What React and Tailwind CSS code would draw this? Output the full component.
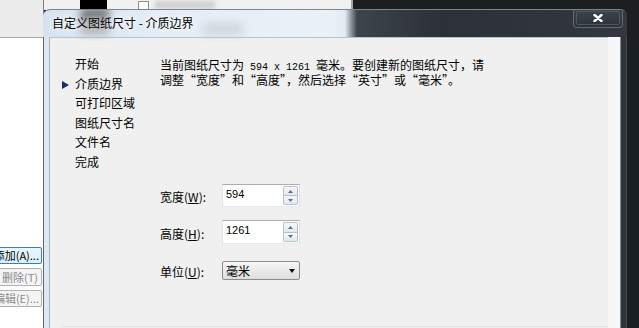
import React from 'react';

const SpinArrows = () => (
  <div className="flex flex-col w-[15px] my-[1px] mr-[1px]">
    <div className="flex-1 flex items-center justify-center border border-[#b8c1cb] rounded-t-[2px] bg-[linear-gradient(180deg,#f6f8fa,#e3e8ee)]">
      <svg width="5" height="3" viewBox="0 0 5 3"><path d="M2.5 0 L5 3 L0 3 Z" fill="#5a6b8c" /></svg>
    </div>
    <div className="flex-1 flex items-center justify-center border border-t-0 border-[#b8c1cb] rounded-b-[2px] bg-[linear-gradient(180deg,#f6f8fa,#e3e8ee)]">
      <svg width="5" height="3" viewBox="0 0 5 3"><path d="M0 0 L5 0 L2.5 3 Z" fill="#5a6b8c" /></svg>
    </div>
  </div>
);

const SpinBox = ({ value, h }) => (
  <div className={`flex w-[78px] ${h} bg-white border border-[#abadb3] border-l-[#e2e3ea] border-r-[#dbdfe6] border-b-[#e3e9ef]`}>
    <span className="flex-1 pl-[3px] pt-[2px] font-['Liberation_Sans',sans-serif] text-[11px] leading-[14px]">{value}</span>
    <SpinArrows />
  </div>
);

const Label = ({ text, k }) => (
  <span className="w-[62px] pt-[3px] whitespace-nowrap">
    {text}(<span className="underline">{k}</span>):
  </span>
);

const navItems = ['开始', '介质边界', '可打印区域', '图纸尺寸名', '文件名', '完成'];

export default function App() {
  return (
    <div className="relative w-[639px] h-[328px] overflow-hidden bg-[#1b1f22] font-['Noto_Sans_CJK_SC',sans-serif] text-[12px] text-black">
      {/* window behind, left edge */}
      <div className="absolute left-0 top-0 w-[44px] h-[328px] flex flex-col bg-white border-r border-[#7a8086]">
        <div className="h-[38px] bg-[#ececec] border-b border-[#a8a8a8]" />
        <div className="flex-1" />
        <div className="flex flex-col items-end gap-[4px] pr-[1px] mb-[21px] text-[11px] leading-[15px]">
          <div className="w-[64px] h-[17px] flex items-center justify-end pr-[2px] whitespace-nowrap rounded-[2px] border border-[#3c7fb1] bg-[linear-gradient(180deg,#eaf6fd,#d9f0fc)]">添加(A)...</div>
          <div className="w-[64px] h-[18px] flex items-center justify-end pr-[3px] whitespace-nowrap rounded-[2px] border border-[#adb2b5] bg-[#f4f4f4] text-[#8b8b8b]">删除(T)</div>
          <div className="w-[64px] h-[17px] flex items-center justify-end pr-[2px] whitespace-nowrap rounded-[2px] border border-[#adb2b5] bg-[#f4f4f4] text-[#8b8b8b]">编辑(E)...</div>
        </div>
      </div>

      {/* window behind, top strip */}
      <div className="absolute left-[44px] top-0 w-[309px] h-[10px] flex items-start bg-[#f1f1f1] border-r-2 border-[#a5a5a5]">
        <div className="ml-[36px] w-[27px] h-[10px] bg-black" />
        <div className="ml-[31px] mt-[1px] w-[11px] h-[9px] border border-[#8f8f8f] bg-white" />
        <div className="ml-[6px] mt-[1px] w-[60px] h-[8px] bg-[#cfcfcf] blur-[2px]" />
      </div>

      {/* dialog */}
      <div className="absolute left-[43px] top-[9px] w-[584px] h-[330px] flex flex-col rounded-t-[7px] overflow-hidden border-t border-[#7b8591]">
        <div className="relative h-[27px] flex items-center bg-[linear-gradient(90deg,#d6e3ef_0px,#e4edf5_120px,#eaf2f8_290px,#e2ebf2_302px,#3d444b_314px,#2b3136_400px,#32383e_584px)]">
          <div className="absolute left-[38px] top-0 w-[28px] h-[27px] bg-[linear-gradient(180deg,#000,#666_60%,transparent)] blur-[4px] opacity-70" />
          <div className="absolute left-[160px] top-[14px] w-[40px] h-[10px] bg-[#b8c0c8] blur-[5px] opacity-60" />
          <span className="relative pl-[9px] pb-[1px] [text-shadow:0_0_6px_#fff,0_0_10px_#fff]">自定义图纸尺寸 - 介质边界</span>
          <div className="absolute right-[4px] -top-[1px] w-[50px] h-[19px] flex items-center justify-center rounded-b-[4px] border border-t-0 border-[#626a73] bg-[linear-gradient(180deg,#3e454d,#2c3238)]">
            <div className="absolute inset-[2px] rounded-[2px] border border-[#4d555e]" />
            <svg className="relative" width="10" height="8" viewBox="0 0 10 8">
              <path d="M1.5 1 L8.5 7 M8.5 1 L1.5 7" stroke="#fff" strokeWidth="2.4" strokeLinecap="round" />
            </svg>
          </div>
        </div>

        <div className="flex flex-1">
          <div className="w-[7px] border-l border-r border-l-[#5d6770] border-r-[#a3afbb] bg-[#dde8f2]" />

          <div className="w-[558px] flex flex-col bg-[#f0f0f0] border-t border-[#b9c3cc]">
            <div className="flex">
              <div className="w-[110px] pl-[12px] pt-[16px] leading-[19.6px]">
                {navItems.map((t, i) => (
                  <div key={t} className="flex items-center whitespace-nowrap">
                    <span className="w-[13px] flex pt-[3px]">
                      {i === 1 && (
                        <svg width="7" height="8" viewBox="0 0 7 8"><path d="M0 0 L7 4 L0 8 Z" fill="#1c2a6e" /></svg>
                      )}
                    </span>
                    {t}
                  </div>
                ))}
              </div>

              <div className="flex flex-col pt-[21px]">
                <p className="leading-[12px] whitespace-nowrap">
                  当前图纸尺寸为<span className="font-['Liberation_Mono',monospace] text-[10px]"> 594 x 1261 </span>毫米。要创建新的图纸尺寸，请
                  <br />
                  调整“宽度”和“高度”，然后选择“英寸”或“毫米”。
                </p>

                <div className="mt-[98px] flex items-center">
                  <Label text="宽度" k="W" />
                  <SpinBox value="594" h="h-[23px]" />
                </div>
                <div className="mt-[13px] flex items-center">
                  <Label text="高度" k="H" />
                  <SpinBox value="1261" h="h-[24px]" />
                </div>
                <div className="mt-[16px] flex items-center">
                  <Label text="单位" k="U" />
                  <div className="w-[78px] h-[19px] flex items-center justify-between pl-[3px] pr-[4px] rounded-[2px] border border-[#8c8c8c] bg-[linear-gradient(180deg,#f7f7f7,#e9e9e9_50%,#dedede)]">
                    <span className="leading-[14px]">毫米</span>
                    <svg width="6" height="4" viewBox="0 0 6 4"><path d="M0 0 L6 0 L3 4 Z" fill="#111" /></svg>
                  </div>
                </div>
              </div>
            </div>

            <div className="mt-[45px] pl-[12px]">
              <div className="h-[1px] bg-[#e2e2e2]" />
              <div className="mt-[1px] h-[2px] bg-[#a2a2a2]" />
            </div>
          </div>

          <div className="w-[12px] bg-[#f5f6f8]" />
          <div className="w-[7px] border-l border-r border-l-[#7f8a95] border-r-[#454c53] bg-[#2e343a]" />
        </div>
      </div>
    </div>
  );
}
